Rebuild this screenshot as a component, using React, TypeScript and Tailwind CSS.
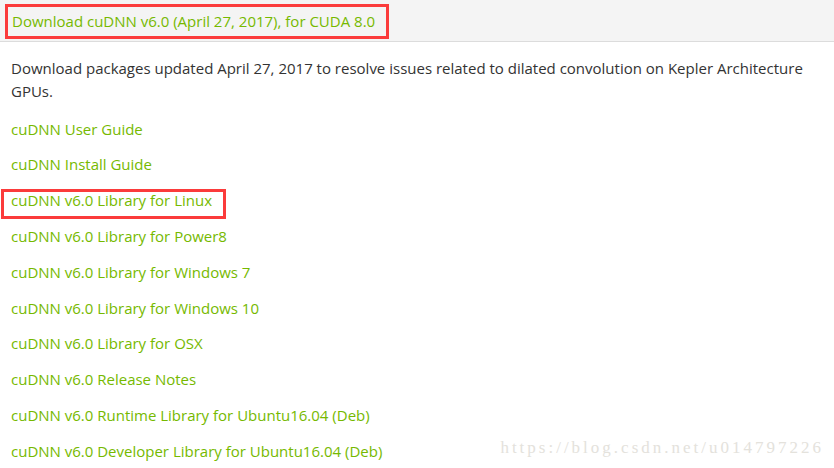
const links = [
  'cuDNN User Guide',
  'cuDNN Install Guide',
  'cuDNN v6.0 Library for Linux',
  'cuDNN v6.0 Library for Power8',
  'cuDNN v6.0 Library for Windows 7',
  'cuDNN v6.0 Library for Windows 10',
  'cuDNN v6.0 Library for OSX',
  'cuDNN v6.0 Release Notes',
  'cuDNN v6.0 Runtime Library for Ubuntu16.04 (Deb)',
  'cuDNN v6.0 Developer Library for Ubuntu16.04 (Deb)',
];

export default function App() {
  return (
    <div className="relative w-[834px] h-[468px] overflow-hidden bg-white font-['Open_Sans',sans-serif] text-[15px]">
      {/* Section header */}
      <div className="h-[42px] bg-[#f4f4f4] border-b border-[#dcdcdc] pl-[5px] pt-[4px]">
        <div className="inline-flex h-[35px] w-[384px] items-center border-[3px] border-[#fb3b3b] pl-[4px]">
          <span className="text-[#76b900] whitespace-nowrap">Download cuDNN v6.0 (April 27, 2017), for CUDA 8.0</span>
        </div>
      </div>

      <div className="pl-[11px] pt-[15px]">
        <p className="text-[#333] leading-[23px] w-[815px]">
          Download packages updated April 27, 2017 to resolve issues related to dilated convolution on Kepler Architecture GPUs.
        </p>

        <ul className="mt-[8px]">
          {links.map((l) =>
            l === 'cuDNN v6.0 Library for Linux' ? (
              <li key={l} className="h-[35.8px] flex items-start -ml-[10px]">
                <span className="mt-[6.4px] block h-[30px] w-[225px] border-[3px] border-[#fb3b3b] pl-[7px] leading-[16px] text-[#76b900] whitespace-nowrap">
                  {l}
                </span>
              </li>
            ) : (
              <li key={l} className="h-[35.8px] flex items-center text-[#76b900]">
                {l}
              </li>
            )
          )}
        </ul>
      </div>

      <div className="absolute right-[10px] bottom-[10px] font-['Liberation_Serif',serif] text-[17px] leading-[20px] text-[#e4e2dc] tracking-[3px]">
        https://blog.csdn.net/u014797226
      </div>
    </div>
  );
}
